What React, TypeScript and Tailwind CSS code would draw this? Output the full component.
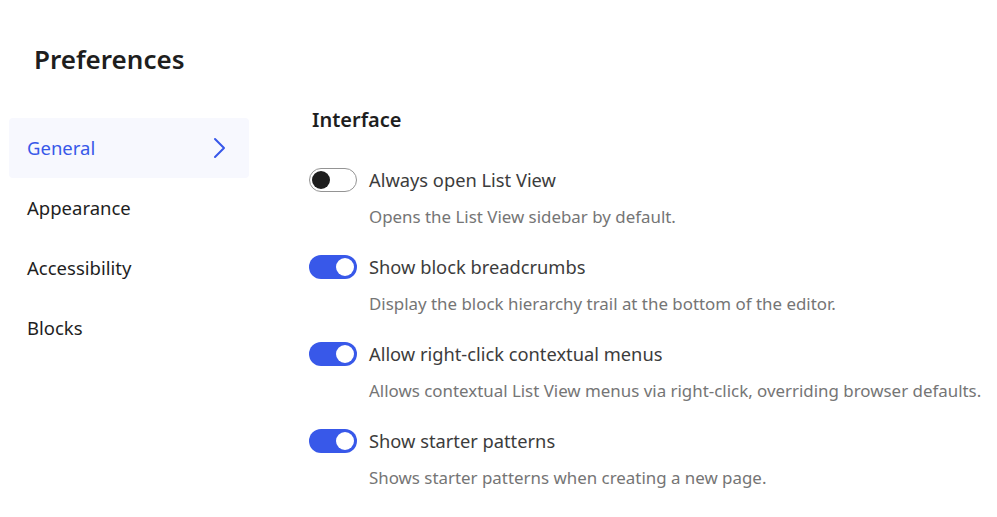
const options = [
  { label: "Always open List View", help: "Opens the List View sidebar by default.", on: false },
  { label: "Show block breadcrumbs", help: "Display the block hierarchy trail at the bottom of the editor.", on: true },
  { label: "Allow right-click contextual menus", help: "Allows contextual List View menus via right-click, overriding browser defaults.", on: true },
  { label: "Show starter patterns", help: "Shows starter patterns when creating a new page.", on: true },
];

const tabs = ["General", "Appearance", "Accessibility", "Blocks"];

function Toggle({ on }: { on: boolean }) {
  if (on) {
    return (
      <div className="w-[48px] h-[24px] rounded-full bg-[#3858e9] flex items-center justify-end px-[3px] shrink-0">
        <div className="w-[18px] h-[18px] rounded-full bg-white"></div>
      </div>
    );
  }
  return (
    <div className="w-[48px] h-[24px] rounded-full bg-white border border-[#949494] flex items-center px-[2px] shrink-0">
      <div className="w-[18px] h-[18px] rounded-full bg-[#1e1e1e]"></div>
    </div>
  );
}

export default function App() {
  return (
    <div className="w-[997px] h-[517px] bg-white text-[#1e1e1e] overflow-hidden" style={{ fontFamily: '"Noto Sans", "Open Sans", sans-serif' }}>
      <h1 className="pl-[34px] pt-[40px] text-[26px] leading-[38px] font-semibold text-[#1e1e1e]">Preferences</h1>

      <div className="flex mt-[40px]">
        {/* sidebar */}
        <nav className="w-[240px] ml-[9px] flex flex-col">
          {tabs.map((t, i) => (
            <div
              key={t}
              className={
                i === 0
                  ? "h-[60px] rounded-[4px] bg-[#f7f8fe] flex items-center justify-between pl-[18px] pr-[23px] text-[#3858e9]"
                  : "h-[60px] flex items-center pl-[18px] text-[#1e1e1e]"
              }
            >
              <span className="text-[18.5px]">{t}</span>
              {i === 0 && (
                <svg width="13" height="22" viewBox="0 0 13 22" fill="none">
                  <polyline points="2,2 11,11 2,20" stroke="currentColor" strokeWidth="2" strokeLinecap="round" strokeLinejoin="round" />
                </svg>
              )}
            </div>
          ))}
        </nav>

        {/* content */}
        <section className="ml-[60px] flex-1">
          <h2 className="pl-[3px] text-[20px] leading-[30px] font-semibold text-[#1e1e1e] mt-[-13px]">Interface</h2>
          <div className="mt-[32px] flex flex-col gap-[25px]">
            {options.map((o) => (
              <div key={o.label} className="flex flex-col">
                <div className="flex items-center gap-[12px]">
                  <Toggle on={o.on} />
                  <span className="text-[18.3px] leading-[26px] text-[#3c3c3c]">{o.label}</span>
                </div>
                <p className="pl-[60px] mt-[12px] text-[16.9px] leading-[24px] text-[#757575]">{o.help}</p>
              </div>
            ))}
          </div>
        </section>
      </div>
    </div>
  );
}
